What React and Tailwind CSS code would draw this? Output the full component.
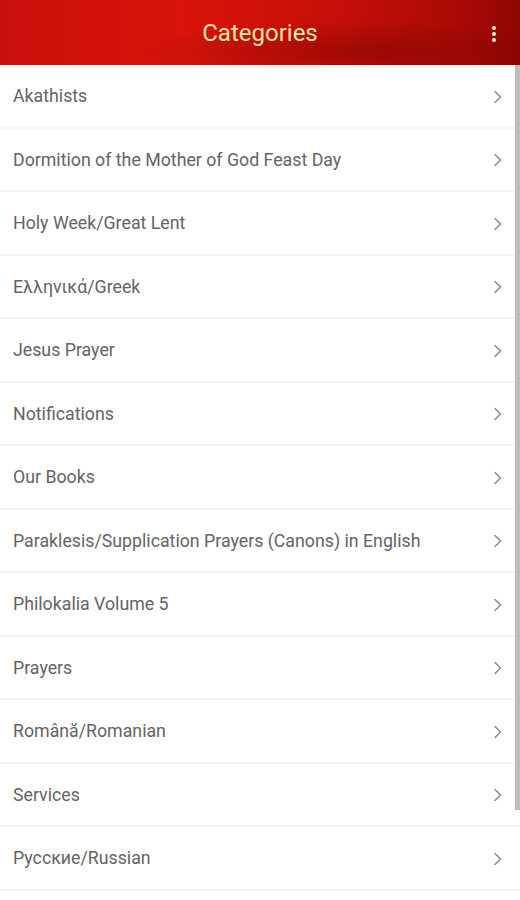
import React from 'react';

const categories = [
  'Akathists',
  'Dormition of the Mother of God Feast Day',
  'Holy Week/Great Lent',
  'Ελληνικά/Greek',
  'Jesus Prayer',
  'Notifications',
  'Our Books',
  'Paraklesis/Supplication Prayers (Canons) in English',
  'Philokalia Volume 5',
  'Prayers',
  'Română/Romanian',
  'Services',
  'Русские/Russian',
];

const Chevron = () => (
  <svg width="10" height="16" viewBox="0 0 10 16" fill="none" className="shrink-0">
    <path d="M2 2.5 L7.5 8 L2 13.5" stroke="#8a8a8a" strokeWidth="1.5" strokeLinecap="round" strokeLinejoin="round" />
  </svg>
);

const App = () => {
  return (
    <div className="relative h-[900px] w-[520px] overflow-hidden bg-white font-['Roboto',sans-serif]">
      {/* header */}
      <div className="relative flex h-[65px] items-center justify-center bg-[linear-gradient(90deg,#c90f0a_0%,#d8140b_35%,#c50f08_65%,#a80a05_90%,#8e0703_100%)]">
        <div className="absolute inset-0 bg-[radial-gradient(ellipse_at_70%_80%,rgba(90,0,0,0.35),transparent_45%)]" />
        <h1 className="relative text-[24px] text-[#fbe3a6]">Categories</h1>
        <div className="absolute right-[24px] top-[26px] flex flex-col gap-[2px]">
          <span className="h-[4px] w-[4px] rounded-full bg-[#fff1d6]" />
          <span className="h-[4px] w-[4px] rounded-full bg-[#fff1d6]" />
          <span className="h-[4px] w-[4px] rounded-full bg-[#fff1d6]" />
        </div>
      </div>

      {/* list */}
      <ul className="flex flex-col">
        {categories.map((name) => (
          <li
            key={name}
            className="flex h-[63.5px] items-center justify-between border-b-2 border-[#f3f3f3] pl-[13px] pr-[17px] pt-[2px]"
          >
            <span className="text-[17.75px] text-[#646464]">{name}</span>
            <Chevron />
          </li>
        ))}
      </ul>

      {/* scrollbar */}
      <div className="absolute right-0 top-[65px] h-[745px] w-[5px] bg-[#bdbdbd]" />
    </div>
  );
};

export default App;
